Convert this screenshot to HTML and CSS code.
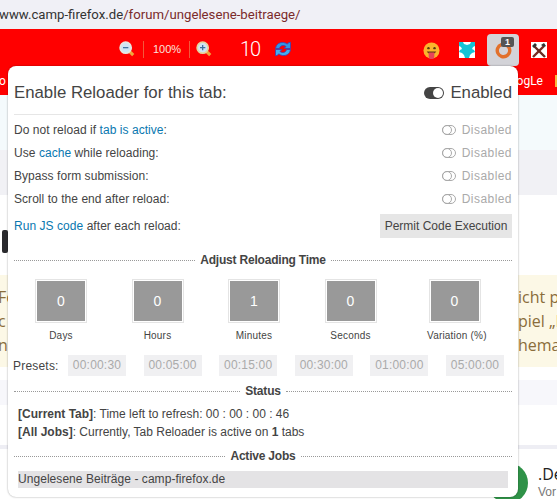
FILE: index.html
```html
<!DOCTYPE html>
<html lang="de">
<head>
    <meta charset="UTF-8">
    <title>Tab Reloader</title>
    <link rel="stylesheet" href="styles.css">
</head>
<body>
    <div class="address-bar">
        <span class="url-host">www.camp-firefox.de</span><span class="url-path">/forum/ungelesene-beitraege/</span>
    </div>

    <div class="toolbar">
        <svg class="tool-icon zoom-out" viewBox="0 0 18 18">
            <path d="M12 12l4 4" stroke="#f0a63c" stroke-width="3.500"/>
            <circle cx="7.500" cy="7.500" r="6.200" fill="#cfe4f4" stroke="#e6e6e0" stroke-width="2"/>
            <path d="M4.500 7.500h6" stroke="#3d6f9c" stroke-width="1.400"/>
        </svg>
        <span class="tool-sep"></span>
        <span class="zoom-level">100%</span>
        <span class="tool-sep"></span>
        <svg class="tool-icon zoom-in" viewBox="0 0 18 18">
            <path d="M12 12l4 4" stroke="#f0a63c" stroke-width="3.500"/>
            <circle cx="7.500" cy="7.500" r="6.200" fill="#cfe4f4" stroke="#e4d6a0" stroke-width="2"/>
            <path d="M4.500 7.500h6M7.500 4.500v6" stroke="#3d6f9c" stroke-width="1.400"/>
        </svg>
        <span class="tab-count">10</span>
        <svg class="tool-icon refresh" viewBox="0 0 18 18">
            <path d="M1.500 8.500C2 4 6 2 9.500 2.500c1.500.2 2.700 .8 3.600 1.600L15 2.500l1.500 -.3v6.300h-6.500l2 -2c-2.500 -1.800 -6 -1 -6.500 2z" fill="#2f97e6" stroke="#4a3fa8" stroke-width=".9"/>
            <path d="M16.500 9.500C16 14 12 16 8.500 15.500c-1.500 -.2 -2.700 -.8 -3.600 -1.600L3 15.500l-1.500 .3V9.500h6.500l-2 2c2.500 1.800 6 1 6.500 -2z" fill="#41aef0" stroke="#4a3fa8" stroke-width=".9"/>
        </svg>

        <svg class="tool-icon smiley" viewBox="0 0 18 18">
            <circle cx="9" cy="9" r="8.500" fill="#fbb42c"/>
            <circle cx="5.800" cy="6.500" r="1.300" fill="#5a3a10"/>
            <circle cx="12.200" cy="6.500" r="1.300" fill="#5a3a10"/>
            <path d="M4 10h10l-1.500 1.800h-7z" fill="#5a3a10"/>
            <path d="M6 11h6v4a3 3 0 0 1-6 0z" fill="#e8445a"/>
        </svg>
        <svg class="tool-icon puzzle" viewBox="0 0 16 16">
            <rect width="16" height="16" fill="#fff"/>
            <path d="M0 0h4l1 2 3 1 3-1 1-2h4v4l-2 1-1 2 2 1 1 2-3 1-2 2-1 3h-4l-1-3-2-2-3-1 1-2 2-1-1-2-2-1z" fill="#17c3d6"/>
        </svg>
        <div class="reloader-btn">
            <svg class="reloader-icon" viewBox="0 0 18 18">
                <circle cx="9" cy="9" r="6.600" fill="none" stroke="#e2702c" stroke-width="3.600" stroke-dasharray="36 5.500" transform="rotate(-70 9 9)"/>
            </svg>
            <span class="reloader-badge">1</span>
        </div>
        <svg class="tool-icon tools" viewBox="0 0 16 16">
            <rect width="16" height="16" fill="#fff"/>
            <path d="M2 15L13 4" stroke="#7a2a22" stroke-width="2.400"/>
            <path d="M14 15L3 4" stroke="#6a2a22" stroke-width="2.400"/>
            <path d="M1 4l3-3 2 2-3 3zM10 3l3-2 2 3-2 1z" fill="#333"/>
        </svg>
    </div>

    <div class="bookmarks">
        <span class="bm-left">o</span>
        <span class="bm-right">ogLe</span>
        <span class="bm-folder"></span>
    </div>

    <div class="page">
        <div class="page-hero"></div>
        <div class="page-nav"></div>
        <div class="page-gap"><span class="dark-mark"></span></div>
        <div class="notice">
            <div class="notice-left">Fo<br>c<br>n</div>
            <div class="notice-right">icht p<br>piel „P<br>hema</div>
        </div>
        <div class="page-gap2"></div>
        <div class="page-nav2"></div>
        <div class="page-gap3"></div>
        <div class="post">
            <span class="avatar"></span>
            <div class="post-text">
                <div class="post-title">.De</div>
                <div class="post-by">Vor</div>
            </div>
        </div>
    </div>

    <div class="popup">
        <div class="popup-head">
            <span>Enable Reloader for this tab:</span>
            <span class="head-state"><span class="toggle-on"></span>Enabled</span>
        </div>

        <div class="opt-row">
            <span>Do not reload if <a class="lnk">tab is active</a>:</span>
            <span class="off"><span class="toggle-off"></span>Disabled</span>
        </div>
        <div class="opt-row">
            <span>Use <a class="lnk">cache</a> while reloading:</span>
            <span class="off"><span class="toggle-off"></span>Disabled</span>
        </div>
        <div class="opt-row">
            <span>Bypass form submission:</span>
            <span class="off"><span class="toggle-off"></span>Disabled</span>
        </div>
        <div class="opt-row">
            <span>Scroll to the end after reload:</span>
            <span class="off"><span class="toggle-off"></span>Disabled</span>
        </div>
        <div class="opt-row js-row">
            <span><a class="lnk">Run JS code</a> after each reload:</span>
            <button class="permit">Permit Code Execution</button>
        </div>

        <div class="legend">Adjust Reloading Time</div>
        <div class="time-row">
            <div class="time-col"><div class="time-box">0</div><div class="time-label">Days</div></div>
            <div class="time-col"><div class="time-box">0</div><div class="time-label">Hours</div></div>
            <div class="time-col"><div class="time-box">1</div><div class="time-label">Minutes</div></div>
            <div class="time-col"><div class="time-box">0</div><div class="time-label">Seconds</div></div>
            <div class="time-col variation"><div class="time-box">0</div><div class="time-label">Variation (%)</div></div>
        </div>
        <div class="presets">
            <span class="presets-label">Presets:</span>
            <span class="preset">00:00:30</span>
            <span class="preset">00:05:00</span>
            <span class="preset">00:15:00</span>
            <span class="preset">00:30:00</span>
            <span class="preset">01:00:00</span>
            <span class="preset">05:00:00</span>
        </div>

        <div class="legend status-legend">Status</div>
        <div class="status">
            <div><b>[Current Tab]</b>: Time left to refresh: 00 : 00 : 00 : 46</div>
            <div><b>[All Jobs]</b>: Currently, Tab Reloader is active on <b>1</b> tabs</div>
        </div>

        <div class="legend jobs-legend">Active Jobs</div>
        <div class="job">Ungelesene Beiträge - camp-firefox.de</div>
    </div>
</body>
</html>
```

FILE: styles.css
```css
html, body {
    height: 100%;
}

body {
    margin: 0;
    overflow: hidden;
    position: relative;
    font-family: "Liberation Sans", Arial, sans-serif;
    background-color: #fff;
}

.address-bar {
    height: 29px;
    line-height: 29px;
    background-color: #f0f0f6;
    font-family: Roboto, sans-serif;
    font-size: 13.2px;
    white-space: nowrap;
    text-indent: -1px;
}

.url-host {
    color: #333;
}

.url-path {
    color: #7b2b2b;
}

/* red browser toolbar */
.toolbar {
    height: 37px;
    background-color: #ff0000;
    display: flex;
    align-items: flex-start;
    padding-left: 119px;
}

.tool-icon {
    display: block;
    flex: none;
}

.zoom-out, .zoom-in {
    width: 16px;
    height: 16px;
    margin-top: 12px;
}

.tool-sep {
    width: 1px;
    height: 17px;
    margin: 12px 0 0 8px;
    background-color: #f25a3c;
}

.zoom-level {
    width: 27px;
    margin: 13px 0 0 9px;
    color: #fbe3dd;
    font-size: 11px;
    line-height: 15px;
    white-space: nowrap;
}

.zoom-level + .tool-sep {
    margin-left: 9px;
}

.tool-sep + .zoom-in {
    margin-left: 6px;
}

.tab-count {
    width: 15px;
    margin: 8px 0 0 28px;
    color: #fff;
    font-family: Roboto, sans-serif;
    font-size: 20px;
    font-weight: 300;
    letter-spacing: -1px;
    line-height: 24px;
}

.refresh {
    width: 18px;
    height: 18px;
    margin: 11px 0 0 19px;
}

.smiley {
    width: 17px;
    height: 17px;
    margin: 13px 0 0 131px;
}

.puzzle {
    width: 16px;
    height: 16px;
    margin: 13px 0 0 19px;
}

.reloader-btn {
    position: relative;
    width: 32px;
    height: 32px;
    margin: 5px 0 0 12px;
    background-color: #d3d3d8;
    border-radius: 4px;
}

.reloader-icon {
    position: absolute;
    left: 8px;
    top: 8px;
    width: 17px;
    height: 17px;
}

.reloader-badge {
    position: absolute;
    left: 14px;
    top: 3px;
    width: 13px;
    height: 10px;
    background-color: #555;
    border-radius: 2px;
    color: #fff;
    font-size: 9px;
    font-weight: bold;
    line-height: 10px;
    text-align: center;
}

.tools {
    width: 16px;
    height: 16px;
    margin: 13px 0 0 12px;
}

.bookmarks {
    height: 29px;
    background-color: #ff0000;
    font-family: Roboto, sans-serif;
    font-size: 12px;
    line-height: 30px;
    color: #fff;
    display: flex;
}

.bm-left {
    margin-left: -1px;
}

.bm-right {
    margin-left: auto;
    margin-right: 12px;
}

.bm-folder {
    width: 6px;
    height: 12px;
    margin: 9px -4px 0 0;
    background-color: #f8b53c;
}

.page {
    background-color: #fff;
}

.page-hero {
    height: 55px;
    background-color: #f4fafc;
}

.page-nav {
    height: 45px;
    background-color: #f1f1f5;
}

.page-gap {
    height: 80px;
    padding-top: 35px;
    box-sizing: border-box;
}

.dark-mark {
    display: block;
    width: 6px;
    height: 23px;
    margin-left: 2px;
    background-color: #2a2a2e;
    border-radius: 2px;
}

.notice {
    height: 92px;
    background-color: #fcf8e6;
    display: flex;
    justify-content: space-between;
    color: #8a6d3b;
    font-family: "Open Sans", sans-serif;
    font-size: 16px;
    line-height: 24px;
    padding-top: 10px;
    box-sizing: border-box;
    white-space: nowrap;
}

.notice-left {
    margin-left: -2px;
    width: 10px;
}

.notice-right {
    width: 39px;
}

.page-gap2 {
    height: 13px;
}

.page-nav2 {
    height: 25px;
    background-color: #f7f7fb;
}

.page-gap3 {
    height: 40px;
    border-bottom: 4px solid #eeeef4;
}

.post {
    display: flex;
    height: 60px;
}

.avatar {
    width: 40px;
    height: 40px;
    margin: 14px 0 0 488px;
    background-color: #2f9248;
    border-radius: 50%;
    flex: none;
}

.post-text {
    margin: 15px 0 0 10px;
    white-space: nowrap;
}

.post-title {
    font-family: "Open Sans", sans-serif;
    font-size: 16px;
    line-height: 20px;
    color: #222;
}

.post-by {
    font-size: 12px;
    color: #777;
    line-height: 16px;
}

/* reloader popup over the page */
.popup {
    position: absolute;
    left: 8px;
    top: 66px;
    width: 498px;
    height: 431px;
    padding: 0 6px;
    background-color: #fff;
    border-radius: 8px;
    box-shadow: 0 0 2px rgba(0,0,0,0.4);
    color: #444;
    font-size: 12px;
}

.popup-head {
    height: 49px;
    border-bottom: 1px solid #e6e6e6;
    display: flex;
    justify-content: space-between;
    align-items: center;
    font-size: 16.8px;
    padding-top: 5px;
    box-sizing: border-box;
}

.head-state {
    display: flex;
    align-items: center;
}

.toggle-on {
    width: 20px;
    height: 12px;
    margin-right: 6px;
    background-color: #444;
    border-radius: 6px;
    position: relative;
}

.toggle-on::after {
    content: "";
    position: absolute;
    right: 1px;
    top: 1px;
    width: 10px;
    height: 10px;
    border-radius: 50%;
    background-color: #fff;
}

.opt-row {
    height: 23px;
    display: flex;
    justify-content: space-between;
    align-items: center;
    letter-spacing: 0.05px;
}

.popup-head + .opt-row {
    margin-top: 3px;
}

.lnk {
    color: #0a78b0;
}

.off {
    display: flex;
    align-items: center;
    color: #aaa;
    letter-spacing: 0.45px;
}

.toggle-off {
    width: 12px;
    height: 8px;
    margin-right: 6px;
    border: 1px solid #aaa;
    border-radius: 5px;
    position: relative;
}

.toggle-off::after {
    content: "";
    position: absolute;
    left: -1px;
    top: -1px;
    width: 8px;
    height: 8px;
    border: 1px solid #aaa;
    border-radius: 50%;
}

.js-row {
    height: 24px;
    margin-top: 4px;
}

.permit {
    width: 132px;
    height: 24px;
    padding: 0;
    border: none;
    background-color: #e6e6e6;
    color: #444;
    font-family: inherit;
    font-size: 12px;
}

.legend {
    display: flex;
    align-items: center;
    gap: 5px;
    margin-top: 14px;
    height: 16px;
    font-weight: bold;
    letter-spacing: -0.2px;
    white-space: nowrap;
}

.legend::before, .legend::after {
    content: "";
    flex: 1;
    border-top: 1px dotted #999;
}

.time-row {
    display: grid;
    grid-template-columns: 50px 50px 50px 50px 60px;
    column-gap: 46.5px;
    padding-left: 22px;
    margin-top: 12px;
}

.variation {
    margin-left: 5px;
}

.time-col {
    text-align: center;
}

.time-box {
    width: 50px;
    height: 42px;
    margin: 0 auto;
    box-sizing: border-box;
    border: 1px solid #fff;
    outline: 1px solid #e4e4e4;
    background-color: #999;
    color: #fff;
    font-size: 14px;
    line-height: 40px;
}

.time-label {
    margin-top: 7px;
    font-size: 10px;
    line-height: 14px;
    letter-spacing: 0.2px;
    white-space: nowrap;
}

.presets {
    display: flex;
    align-items: center;
    height: 21px;
    margin-top: 12px;
    margin-left: -1px;
}

.presets-label {
    flex: none;
    width: 55px;
    letter-spacing: 0.2px;
}

.preset {
    flex: none;
    width: 58px;
    height: 21px;
    margin-right: 17.600px;
    background-color: #f0f0f2;
    color: #aaa;
    line-height: 21px;
    text-align: center;
    letter-spacing: 0.2px;
}

.preset:last-child {
    margin-right: 0;
}

.status-legend {
    margin-top: 7px;
}

.status {
    margin: 6px 0 0 4px;
    line-height: 18px;
}

.jobs-legend {
    margin-top: 7px;
}

.job {
    height: 17px;
    margin: 7px 4px 0;
    background-color: #e4e3e5;
    line-height: 17px;
    letter-spacing: 0.05px;
}
```
